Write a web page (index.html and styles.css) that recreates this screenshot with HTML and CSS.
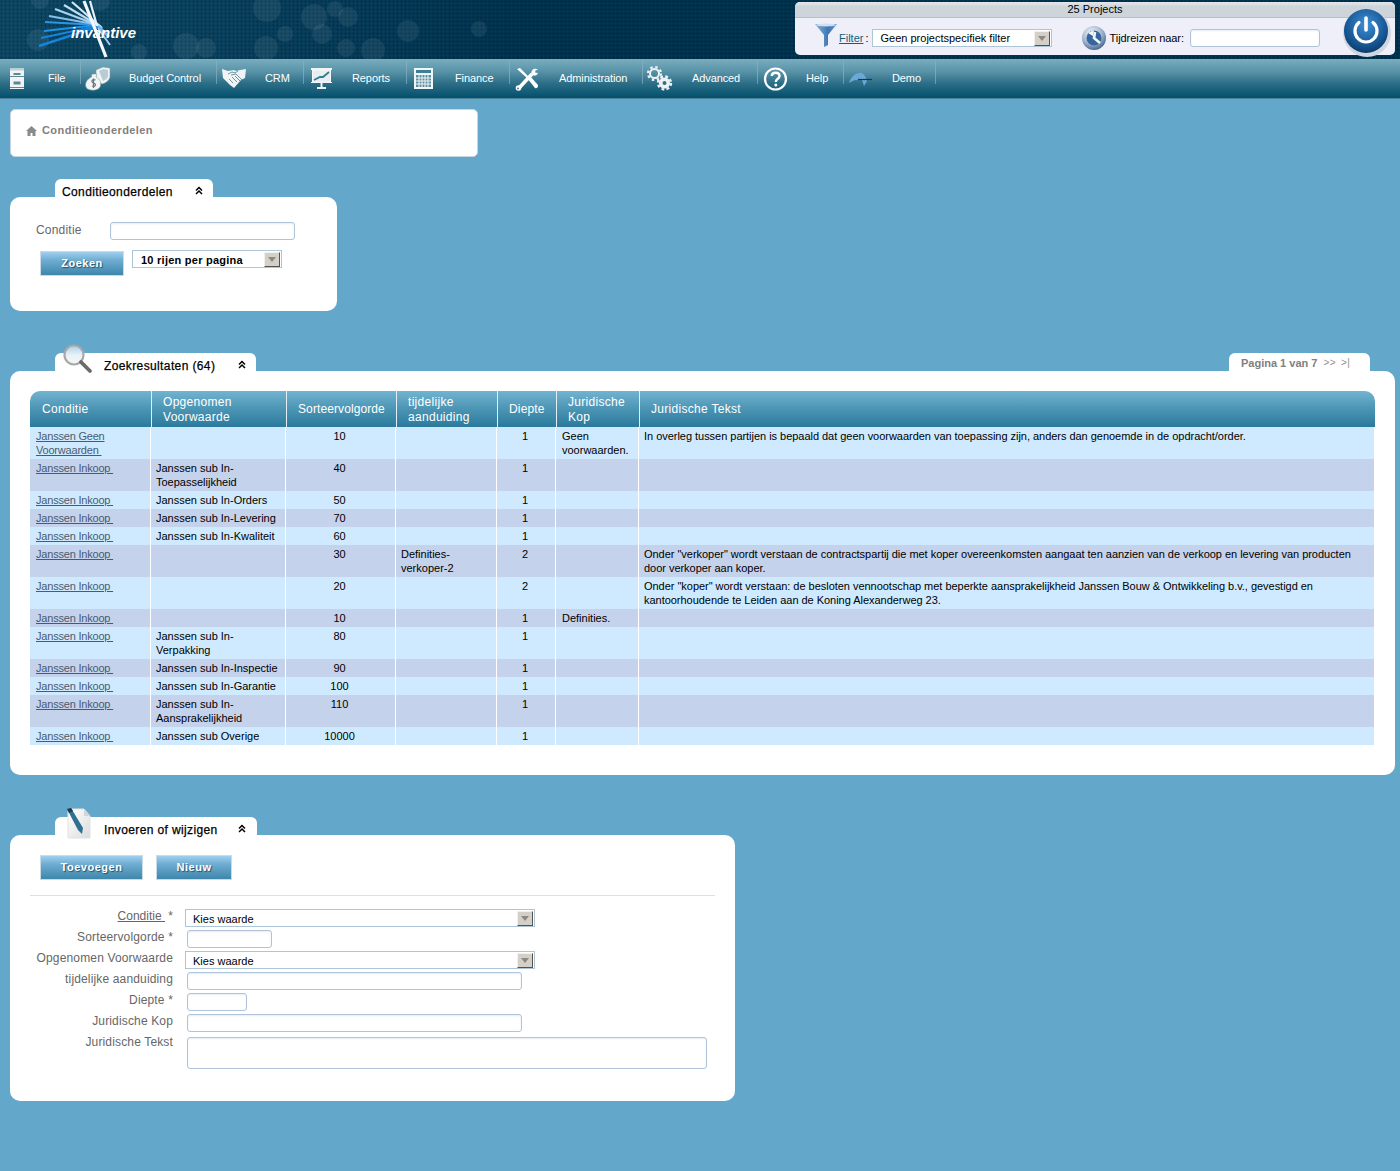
FILE: index.html
```html
<!DOCTYPE html>
<html lang="nl">
<head>
<meta charset="utf-8">
<title>Conditieonderdelen</title>
<link rel="stylesheet" href="styles.css">
</head>
<body>
<header class="top">
  <svg class="bokeh" width="520" height="59" viewBox="0 0 520 59">
    <g fill="#fff" fill-opacity=".07">
      <circle cx="314" cy="17" r="13"/><circle cx="335" cy="9" r="8"/><circle cx="348" cy="17" r="10"/><circle cx="408" cy="31" r="11"/><circle cx="322" cy="34" r="10"/><circle cx="285" cy="34" r="8"/><circle cx="346" cy="48" r="9"/><circle cx="373" cy="50" r="12"/><circle cx="479" cy="29" r="8"/><circle cx="267" cy="8" r="14"/><circle cx="186" cy="46" r="13"/><circle cx="206" cy="48" r="10"/><circle cx="266" cy="48" r="12"/><circle cx="100" cy="1" r="10"/><circle cx="38" cy="40" r="11"/><circle cx="40" cy="0" r="9"/><circle cx="139" cy="52" r="8"/>
    </g>
  </svg>
  <svg class="logo" width="150" height="59" viewBox="0 0 150 59">
    <g fill="none" stroke-linecap="butt">
      <path d="M39 46 L97 27" stroke="#1584dc" stroke-width="2.400"/>
      <path d="M41 38 L97 26" stroke="#1584dc" stroke-width="2.200"/>
      <path d="M44 31 L97 25" stroke="#2492e4" stroke-width="2.200"/>
      <path d="M45 22 L98 25" stroke="#2d97e6" stroke-width="2.200"/>
      <path d="M49 16 L99 25" stroke="#86bfec" stroke-width="2.200"/>
      <path d="M55 9 L100 26" stroke="#a9d2f2" stroke-width="2.200"/>
      <path d="M64 5 L101 27" stroke="#bcdcf5" stroke-width="2.200"/>
      <path d="M72 2 L102 28" stroke="#d3e8f8" stroke-width="2.200"/>
      <path d="M84 1 L106 57" stroke="#f2f8fd" stroke-width="3.200"/>
      <path d="M90 1 L97 26" stroke="#e7f2fb" stroke-width="2.200"/>
      <path d="M98 26 L109 37" stroke="#6fb2e8" stroke-width="3"/>
      <path d="M98 28 L110 45" stroke="#9fcdf0" stroke-width="2"/>
    </g>
    <text class="logo-text" x="71" y="38">invantive</text>
  </svg>
  <div class="panel">
    <div class="panel-title">25 Projects</div>
    <div class="panel-row">
      <svg class="funnel" width="22" height="24" viewBox="0 0 22 24">
        <defs><linearGradient id="fg" x1="0" x2="1" y1="0" y2="0"><stop offset="0" stop-color="#8db3d6"/><stop offset=".6" stop-color="#3c76b4"/><stop offset="1" stop-color="#6d9ac9"/></linearGradient></defs>
        <path d="M0 1 H22 L13 12 V22 L9 24 V12 Z" fill="url(#fg)"/>
        <ellipse cx="11" cy="2" rx="10" ry="1.400" fill="#cfe0f0"/>
      </svg>
      <a class="filter-link" href="#">Filter </a><span class="colon">:</span>
      <div class="sel sel-filter"><span>Geen projectspecifiek filter</span><i class="arrow"></i></div>
      <svg class="clock" width="24" height="26" viewBox="0 0 24 26">
        <defs><radialGradient id="cg" cx=".4" cy=".3" r=".75"><stop offset="0" stop-color="#f4f7fa"/><stop offset=".6" stop-color="#9db2cb"/><stop offset="1" stop-color="#3f5d86"/></radialGradient></defs>
        <circle cx="12" cy="13" r="12" fill="url(#cg)"/>
        <circle cx="12" cy="13" r="7.500" fill="#37669f"/>
        <path d="M13 7 L12 13 L18 18" stroke="#f4f7fa" stroke-width="2.600" fill="none"/>
        <path d="M6 8 L12 5 L11 11 Z" fill="#f4f7fa"/>
      </svg>
      <label class="travel-label" for="travel">Tijdreizen naar:</label>
      <input class="field field-travel" id="travel" type="text">
    </div>
    <svg class="power" width="50" height="50" viewBox="0 0 50 50">
      <defs><radialGradient id="pg" cx=".5" cy=".35" r=".7"><stop offset="0" stop-color="#3f8fd8"/><stop offset=".7" stop-color="#14538f"/><stop offset="1" stop-color="#0b355f"/></radialGradient></defs>
      <circle cx="25" cy="26" r="24" fill="#cfd6e0"/>
      <circle cx="24" cy="24" r="22" fill="url(#pg)"/>
      <path d="M17 15.500 A11 11 0 1 0 31 15.500" fill="none" stroke="#fff" stroke-width="3.200" stroke-linecap="round"/>
      <path d="M24 11 V23" stroke="#fff" stroke-width="3.600" stroke-linecap="round"/>
    </svg>
  </div>
</header>

<nav class="nav">
  <a class="nav-item" href="#">
    <svg width="48" height="40" viewBox="0 0 48 40"><path d="M10 9 H24 V30 H10 Z" fill="#f0f4f5"/><path d="M10 9 H24 V11.500 H10 Z" fill="#bcd0d7"/><path d="M10 17.500 H24 M10 28.500 H24" stroke="#5e8796" stroke-width="1"/><path d="M13.500 14 H20.500 V16 H13.500 Z M13.500 22.500 H20.500 V25.500 H13.500 Z" fill="#5e8796"/></svg>
    <span>File</span>
  </a>
  <a class="nav-item" href="#">
    <svg width="48" height="40" viewBox="0 0 48 40"><path d="M15 11 L22 8 L29 9 V17 C29 21 25 24 21 25 L15 20 Z" fill="#f0f4f5" stroke="#78a0ae" stroke-width=".6"/><path d="M18 12 L22.500 10 L27 11 V17 C27 19 24.500 21 22 22 Z" fill="#b9ccd3"/><path d="M11 15 L16 15 L15 18 C19 20 21 24 19 28 C17 32 8 32 5.500 29 C3 25 6 20 10.500 18 Z" fill="#f3f5f5" stroke="#88a0a8" stroke-width=".6"/><path d="M14.500 21 C11 19.500 9.500 23 12.500 24 C15.500 25 15 28.500 11 27 M12.500 19.500 V29" stroke="#66777e" stroke-width="1.200" fill="none"/></svg>
    <span>Budget Control</span>
  </a>
  <a class="nav-item" href="#">
    <svg width="48" height="40" viewBox="0 0 48 40"><path d="M5 10 L11 12 L17 11 L19 12 L23 11 L29 10 L28 19 L24 21 L17 29 L13 26 L9 22 L6 19 Z" fill="#f0f4f5"/><path d="M11 15 L15 13 L18 14 L21 12 M14 16 L19 15 L25 21 M12 20 L16 24 M15 18 L20 23 M18 17 L23 22" stroke="#6c97a6" stroke-width="1" fill="none"/></svg>
    <span>CRM</span>
  </a>
  <a class="nav-item" href="#">
    <svg width="48" height="40" viewBox="0 0 48 40"><path d="M7 9 H28 V11 H7 Z" fill="#f0f4f5"/><path d="M8.500 11 H26.500 V23 H8.500 Z" fill="#e8eef0" stroke="#f4f7f8"/><path d="M10 21 L16 18 L19 18 L25 13" stroke="#2f7c95" stroke-width="1.800" fill="none"/><path d="M7 23 H28 V24 H7 Z" fill="#f0f4f5"/><path d="M16.500 24 H18.500 V28 H16.500 Z M13 28 H22 V30 H13 Z" fill="#f0f4f5"/></svg>
    <span>Reports</span>
  </a>
  <a class="nav-item" href="#">
    <svg width="48" height="40" viewBox="0 0 48 40"><path d="M7 9 H26 V30 H7 Z" fill="#f2f5f6"/><path d="M9 11 H24 V14 H9 Z" fill="#3d7f96"/><path d="M9 16 H24 V28 H9 Z" fill="#5b8e9f"/><path d="M12 16 V28 M15 16 V28 M18 16 V28 M21 16 V28 M9 19 H24 M9 22 H24 M9 25 H24" stroke="#f2f5f6" stroke-width="1"/></svg>
    <span>Finance</span>
  </a>
  <a class="nav-item nav-item-wide" href="#">
    <svg width="49" height="40" viewBox="0 0 49 40"><path d="M7 10 L10 9 L19 18 L18 20 Z" fill="#fff"/><path d="M17 19 L20 17 L28 26 C28.500 28 26.500 30 25 29 Z" fill="#fff"/><path d="M9 29 L22 15" stroke="#fff" stroke-width="3.600"/><path d="M28 10.500 C25 8.500 20.500 10.500 21.500 15 C23 17.500 27 17 28 14 L25 13.500 L25.500 11.500 Z" fill="#fff"/><circle cx="8.500" cy="29" r="2.800" fill="#fff"/><circle cx="8" cy="29.500" r="1" fill="#4a8197"/></svg>
    <span>Administration</span>
  </a>
  <a class="nav-item nav-item-wide" href="#">
    <svg width="49" height="40" viewBox="0 0 49 40"><g fill="none" stroke="#eef2f3"><circle cx="11.500" cy="14.500" r="4.500" stroke-width="2"/><circle cx="11.500" cy="14.500" r="6.500" stroke-width="2.200" stroke-dasharray="2.500 2.600"/><circle cx="21.500" cy="24" r="3.800" stroke-width="3.600"/><circle cx="21.500" cy="24" r="6.500" stroke-width="2.400" stroke-dasharray="2.800 2.300"/></g></svg>
    <span>Advanced</span>
  </a>
  <a class="nav-item" href="#">
    <svg width="48" height="40" viewBox="0 0 48 40"><circle cx="17.500" cy="20" r="10.500" fill="none" stroke="#fff" stroke-width="2.200"/><path d="M13.800 17 C14 12.500 21.500 12.800 21.500 17 C21.500 20 17.800 19.500 17.800 23" fill="none" stroke="#fff" stroke-width="2.400"/><circle cx="17.800" cy="26" r="1.500" fill="#fff"/></svg>
    <span>Help</span>
  </a>
  <a class="nav-item" href="#">
    <svg width="48" height="40" viewBox="0 0 48 40"><path d="M5 24 C7 17 13 13 18 14 C20 15 22 18 23 22 L20 27 L18 21 C13 20 9 21 5 24 Z" fill="#6ba8d8"/><path d="M14 20.500 H28" stroke="#173a4c" stroke-width="1.200"/></svg>
    <span>Demo</span>
  </a>
</nav>

<main class="page">
  <div class="crumb">
    <svg class="home" width="11" height="10" viewBox="0 0 11 10"><path d="M5.500 0 L11 5 H9.500 V10 H6.500 V7 H4.500 V10 H1.500 V5 H0 Z" fill="#8a8a8a"/></svg>
    <span>Conditieonderdelen</span>
  </div>

  <section class="sec sec-search">
    <div class="sec-head">
      <div class="tab"><span class="tab-title">Conditieonderdelen</span>
        <svg class="chev" width="8" height="9" viewBox="0 0 8 9"><path d="M1 4.500 L4 1.500 L7 4.500 M1 8 L4 5 L7 8" fill="none" stroke="#000" stroke-width="1.500"/></svg>
      </div>
    </div>
    <div class="card card-search">
      <div class="search-row">
        <label class="search-label" for="c">Conditie</label>
        <input class="field field-search" id="c" type="text">
      </div>
      <div class="search-actions">
        <button class="btn btn-zoeken" type="button">Zoeken</button>
        <div class="sel sel-rows"><span>10 rijen per pagina</span><i class="arrow"></i></div>
      </div>
    </div>
  </section>

  <section class="sec">
    <div class="sec-head">
      <div class="tab tab-icon tab-results">
        <svg class="tab-img" width="30" height="32" viewBox="0 0 30 32">
          <defs><linearGradient id="mg" x1="0" x2="0" y1="0" y2="1"><stop offset="0" stop-color="#a9cfe6"/><stop offset=".5" stop-color="#e8f2f8"/><stop offset="1" stop-color="#f7f7f7"/></linearGradient></defs>
          <circle cx="11" cy="11" r="9.500" fill="url(#mg)" stroke="#a8a8a8" stroke-width="2.200"/>
          <path d="M18 18 L27 27" stroke="#6b6b6b" stroke-width="3.800" stroke-linecap="round"/>
        </svg>
        <span class="tab-title">Zoekresultaten (64)</span>
        <svg class="chev" width="8" height="9" viewBox="0 0 8 9"><path d="M1 4.500 L4 1.500 L7 4.500 M1 8 L4 5 L7 8" fill="none" stroke="#000" stroke-width="1.500"/></svg>
      </div>
      <div class="tab tab-pager"><b>Pagina 1 van 7</b><span class="pager-link">&gt;&gt;</span><span class="pager-link pager-last">&gt;|</span></div>
    </div>
    <div class="card card-results">
      <table class="grid">
        <colgroup><col class="c1"><col class="c2"><col class="c3"><col class="c4"><col class="c5"><col class="c6"><col class="c7"></colgroup>
        <thead><tr>
          <th>Conditie</th><th>Opgenomen Voorwaarde</th><th>Sorteervolgorde</th><th>tijdelijke aanduiding</th><th>Diepte</th><th>Juridische Kop</th><th>Juridische Tekst</th>
        </tr></thead>
        <tbody>
          <tr><td><a href="#">Janssen Geen Voorwaarden&nbsp;</a></td><td></td><td class="num">10</td><td></td><td class="num">1</td><td>Geen voorwaarden.</td><td>In overleg tussen partijen is bepaald dat geen voorwaarden van toepassing zijn, anders dan genoemde in de opdracht/order.</td></tr>
          <tr><td><a href="#">Janssen Inkoop&nbsp;</a></td><td>Janssen sub In-Toepasselijkheid</td><td class="num">40</td><td></td><td class="num">1</td><td></td><td></td></tr>
          <tr><td><a href="#">Janssen Inkoop&nbsp;</a></td><td>Janssen sub In-Orders</td><td class="num">50</td><td></td><td class="num">1</td><td></td><td></td></tr>
          <tr><td><a href="#">Janssen Inkoop&nbsp;</a></td><td>Janssen sub In-Levering</td><td class="num">70</td><td></td><td class="num">1</td><td></td><td></td></tr>
          <tr><td><a href="#">Janssen Inkoop&nbsp;</a></td><td>Janssen sub In-Kwaliteit</td><td class="num">60</td><td></td><td class="num">1</td><td></td><td></td></tr>
          <tr><td><a href="#">Janssen Inkoop&nbsp;</a></td><td></td><td class="num">30</td><td>Definities-verkoper-2</td><td class="num">2</td><td></td><td>Onder "verkoper" wordt verstaan de contractspartij die met koper overeenkomsten aangaat ten aanzien van de verkoop en levering van producten door verkoper aan koper.</td></tr>
          <tr><td><a href="#">Janssen Inkoop&nbsp;</a></td><td></td><td class="num">20</td><td></td><td class="num">2</td><td></td><td>Onder "koper" wordt verstaan: de besloten vennootschap met beperkte aansprakelijkheid Janssen Bouw &amp; Ontwikkeling b.v., gevestigd en kantoorhoudende te Leiden aan de Koning Alexanderweg 23.</td></tr>
          <tr><td><a href="#">Janssen Inkoop&nbsp;</a></td><td></td><td class="num">10</td><td></td><td class="num">1</td><td>Definities.</td><td></td></tr>
          <tr><td><a href="#">Janssen Inkoop&nbsp;</a></td><td>Janssen sub In-Verpakking</td><td class="num">80</td><td></td><td class="num">1</td><td></td><td></td></tr>
          <tr><td><a href="#">Janssen Inkoop&nbsp;</a></td><td>Janssen sub In-Inspectie</td><td class="num">90</td><td></td><td class="num">1</td><td></td><td></td></tr>
          <tr><td><a href="#">Janssen Inkoop&nbsp;</a></td><td>Janssen sub In-Garantie</td><td class="num">100</td><td></td><td class="num">1</td><td></td><td></td></tr>
          <tr><td><a href="#">Janssen Inkoop&nbsp;</a></td><td>Janssen sub In-Aansprakelijkheid</td><td class="num">110</td><td></td><td class="num">1</td><td></td><td></td></tr>
          <tr><td><a href="#">Janssen Inkoop&nbsp;</a></td><td>Janssen sub Overige</td><td class="num">10000</td><td></td><td class="num">1</td><td></td><td></td></tr>
        </tbody>
      </table>
    </div>
  </section>

  <section class="sec">
    <div class="sec-head">
      <div class="tab tab-icon tab-edit">
        <svg class="tab-img tab-img-edit" width="28" height="32" viewBox="0 0 28 32">
          <defs><linearGradient id="dg" x1="0" x2="1" y1="0" y2="1"><stop offset="0" stop-color="#fff"/><stop offset="1" stop-color="#dcdcdc"/></linearGradient></defs>
          <path d="M3 1 H19 L25 8 V30 H3 Z" fill="url(#dg)" stroke="#e2e2e2"/>
          <path d="M19 1 V8 H25 Z" fill="#d4d4d4"/>
          <path d="M2 1 L6 0 L18 20 L17 26 L13 22 Z" fill="#2f6f90"/>
          <path d="M2 1 L6 0 L8 3 L4 5 Z" fill="#1c3c4e"/>
        </svg>
        <span class="tab-title">Invoeren of wijzigen</span>
        <svg class="chev" width="8" height="9" viewBox="0 0 8 9"><path d="M1 4.500 L4 1.500 L7 4.500 M1 8 L4 5 L7 8" fill="none" stroke="#000" stroke-width="1.500"/></svg>
      </div>
    </div>
    <div class="card card-edit">
      <div class="edit-actions">
        <button class="btn btn-add" type="button">Toevoegen</button>
        <button class="btn btn-new" type="button">Nieuw</button>
      </div>
      <hr class="rule">
      <form class="edit-form">
        <span class="lbl lbl-first"><a class="lbl-link" href="#">Conditie&nbsp;</a> *</span><div class="sel sel-wide"><span>Kies waarde</span><i class="arrow"></i></div>
        <label class="lbl">Sorteervolgorde *</label><input class="field f-sort" type="text">
        <label class="lbl">Opgenomen Voorwaarde</label><div class="sel sel-wide"><span>Kies waarde</span><i class="arrow"></i></div>
        <label class="lbl">tijdelijke aanduiding</label><input class="field f-long" type="text">
        <label class="lbl">Diepte *</label><input class="field f-depth" type="text">
        <label class="lbl">Juridische Kop</label><input class="field f-long" type="text">
        <label class="lbl">Juridische Tekst</label><textarea class="field f-text"></textarea>
      </form>
    </div>
  </section>
</main>
</body>
</html>
```

FILE: styles.css
```css
* { box-sizing: border-box; }
html, body { margin: 0; padding: 0; }
body {
  min-height: 1171px;
  background: #63a7cb;
  font-family: "Liberation Sans", Arial, sans-serif;
  font-size: 11px;
  line-height: 14px;
  color: #000;
}

/* fake select */
.sel {
  display: flex;
  align-items: center;
  justify-content: space-between;
  height: 18px;
  padding: 0 0 0 7px;
  background: #fff;
  border: 1px solid #aec5d8;
}
.sel span { white-space: nowrap; padding-top: 1px; }
.arrow {
  position: relative;
  display: block;
  flex: none;
  width: 16px;
  height: 15px;
  margin-right: 1px;
  background: #d4d0c8;
  border: 1px solid;
  border-color: #f2f0ec #55534e #55534e #f2f0ec;
}
.arrow::after {
  content: "";
  position: absolute;
  left: 3px;
  top: 4px;
  border: 4px solid transparent;
  border-top: 5px solid #8b8984;
  border-bottom: 0;
}

.field {
  display: block;
  height: 18px;
  padding: 1px 4px;
  margin: 0;
  background: #fff;
  border: 1px solid #afc4d8;
  border-radius: 3px;
  box-shadow: inset 0 1px 2px #e6edf3;
  font: inherit;
}

/* top banner */
.top {
  position: relative;
  display: flex;
  justify-content: flex-end;
  height: 59px;
  overflow: hidden;
  background-color: #03344f;
  background-image:
    radial-gradient(circle at 1.5px 1.5px, rgba(0, 0, 0, .2) 1px, transparent 1.2px),
    linear-gradient(90deg, #104864 0, #0c425e 220px, #03344f 520px);
  background-size: 4px 4px, 100% 100%;
}
.bokeh, .logo { position: absolute; left: 0; top: 0; }
.logo-text {
  font: italic bold 15px "Liberation Sans", Arial, sans-serif;
  fill: #fff;
}
.panel {
  position: relative;
  width: 600px;
  height: 53px;
  margin: 2px 5px 0 0;
  background: #eeeff9;
  border-radius: 5px;
  overflow: visible;
}
.panel-title {
  height: 16px;
  border-bottom: 1px solid #b4c0ca;
  border-radius: 5px 5px 0 0;
  background: linear-gradient(#e4e8ec, #cdd5db 30%);
  text-align: center;
  line-height: 14px;
}
.panel-row {
  display: flex;
  align-items: center;
  height: 37px;
  padding: 3px 0 0 20px;
}
.funnel { flex: none; margin-top: -6px; }
.filter-link { margin-left: 2px; color: #0f5f82; }
.colon { margin-left: 2px; }
.sel-filter { width: 180px; margin-left: 3px; padding-left: 8px; }
.sel-filter span { padding-top: 0; }
.clock { flex: none; margin-left: 30px; }
.travel-label { width: 74px; margin-left: 4px; white-space: nowrap; letter-spacing: -.06px; }
.field-travel { width: 130px; margin-left: 6px; }
.power { position: absolute; left: 547px; top: 5px; }

/* nav */
.nav {
  display: flex;
  height: 40px;
  background: linear-gradient(#79adbe 0, #5a94a9 30%, #2b6d86 62%, #04506e 97%, #4a8197 97.500%);
}
.nav-item {
  display: flex;
  align-items: center;
  height: 40px;
  flex: none;
  padding-right: 15px;
  color: #fff;
  text-decoration: none;
  letter-spacing: -.1px;
  position: relative;
}
.nav-item::after {
  content: "";
  position: absolute;
  right: 0;
  top: 2px;
  height: 23px;
  width: 1px;
  background: #8ab3c1;
  opacity: .65;
}
.nav-item svg { display: block; flex: none; }
.nav-item span { white-space: nowrap; margin-top: -2px; }
.nav-item:nth-child(1) { width: 81px; }
.nav-item:nth-child(2) { width: 136px; }
.nav-item:nth-child(3) { width: 87px; }
.nav-item:nth-child(4) { width: 103px; }
.nav-item:nth-child(5) { width: 103px; }
.nav-item:nth-child(6) { width: 133px; }
.nav-item:nth-child(7) { width: 115px; }
.nav-item:nth-child(8) { width: 86px; }
.nav-item:nth-child(9) { width: 92px; }

/* page */
.page { padding: 10px 5px 0 10px; }
.crumb {
  display: flex;
  align-items: flex-start;
  width: 468px;
  height: 48px;
  padding: 13px 0 0 15px;
  background: #fff;
  border: 1px solid #c8d6df;
  border-radius: 5px;
  color: #808080;
  font-weight: bold;
  letter-spacing: .43px;
}
.home { margin: 3px 5px 0 0; }

.sec { margin-top: 42px; }
.sec-search { margin-top: 22px; width: 327px; }
.sec-head {
  display: flex;
  justify-content: space-between;
  align-items: flex-end;
  padding: 0 25px 0 45px;
}
.tab {
  position: relative;
  display: flex;
  justify-content: space-between;
  width: 158px;
  height: 18px;
  padding: 6px 10px 0 7px;
  background: #fff;
  border-radius: 6px 6px 0 0;
}
.tab-title {
  font-size: 12px;
  line-height: 14px;
  white-space: nowrap;
  letter-spacing: .38px;
  -webkit-text-stroke: .25px #000;
}
.chev { margin-top: 1px; flex: none; }
.tab-icon { padding-left: 49px; }
.tab-results { width: 201px; }
.tab-edit { width: 202px; padding-right: 11px; }
.tab-img { position: absolute; left: 8px; top: -9px; }
.tab-img-edit { left: 10px; }
.tab-pager {
  justify-content: flex-start;
  width: 141px;
  padding: 3px 0 0 12px;
  color: #808080;
  line-height: 14px;
}
.pager-link { margin-left: 6px; font-size: 10px; letter-spacing: .4px; color: #8e8e8e; }
.pager-last { margin-left: 5px; }

.card {
  background: #fff;
  border-radius: 10px;
}
.card-search { padding: 25px 26px 35px; }
.search-row { display: flex; }
.search-label {
  width: 74px;
  padding-top: 1px;
  font-size: 12px;
  color: #666;
  letter-spacing: .2px;
}
.field-search { width: 185px; }
.search-actions { display: flex; align-items: flex-start; margin-top: 10px; }
.btn {
  height: 25px;
  padding: 0 0 2px;
  border: 1px solid #c9dbe9;
  background: linear-gradient(#a0cfef 0, #6fadd2 35%, #3f86ab 100%);
  color: #fff;
  font: bold 11px/14px "Liberation Sans", Arial, sans-serif;
  letter-spacing: .5px;
  text-shadow: 1px 1px 1px #24506b;
}
.btn-zoeken { width: 84px; margin: 1px 0 0 4px; }
.sel-rows {
  width: 150px;
  margin-left: 8px;
  padding-left: 8px;
  font-weight: bold;
  letter-spacing: .25px;
}

/* results table */
.card-results { padding: 20px 20px 30px; }
.grid {
  width: 100%;
  table-layout: fixed;
  border-collapse: separate;
  border-spacing: 0;
}
.c1 { width: 121px; }
.c2 { width: 135px; }
.c3 { width: 110px; }
.c4 { width: 101px; }
.c5 { width: 59px; }
.c6 { width: 83px; }
.grid th {
  height: 36px;
  padding: 1px 12px 0 11px;
  border-left: 1px solid #e3eef4;
  background: linear-gradient(#72b4d1 0, #4f97b6 45%, #2a7a9d 100%);
  color: #fff;
  font-size: 12px;
  font-weight: normal;
  line-height: 15px;
  letter-spacing: .3px;
  text-align: left;
}
.grid th:first-child { border-left: 0; border-top-left-radius: 10px; padding-left: 12px; }
.grid th:last-child { border-top-right-radius: 10px; }
.grid th:nth-child(3) { letter-spacing: .1px; }
.grid th:nth-child(5) { letter-spacing: .15px; }
.grid td {
  padding: 2px 5px 2px 5px;
  border-right: 1px solid #fff;
  vertical-align: top;
  background: #cfeafe;
}
.grid td:last-child { letter-spacing: -.03px; }
.grid td:nth-child(6) { padding-left: 6px; }
.grid tbody tr:nth-child(even) td { background: #c5d2ec; }
.grid a { color: #4a5a72; letter-spacing: -.2px; }
.grid td:first-child { padding-left: 6px; }
.grid td.num { text-align: center; padding-right: 7px; }
.grid td.num:nth-child(3) { padding-left: 6px; padding-right: 8px; }

/* edit form */
.card-edit { width: 725px; padding: 20px 20px 32px; }
.edit-actions { display: flex; gap: 13px; padding-left: 10px; }
.btn-add { width: 103px; }
.btn-new { width: 76px; }
.rule {
  height: 1px;
  margin: 15px 0 13px;
  border: 0;
  background: #dbe1e5;
}
.edit-form {
  display: grid;
  grid-template-columns: 143px 1fr;
  column-gap: 12px;
  row-gap: 3px;
  align-items: start;
}
.lbl {
  font-size: 12px;
  color: #666;
  text-align: right;
  white-space: nowrap;
  letter-spacing: .15px;
}
.lbl-first { letter-spacing: 0; }
.lbl-link { color: #666; }
.sel-wide { width: 350px; }
.f-sort, .f-long, .f-depth, .f-text { margin-left: 2px; }
.f-sort { width: 85px; }
.f-long { width: 335px; }
.f-depth { width: 60px; }
.f-text { width: 520px; height: 32px; margin-top: 2px; resize: none; }
```
